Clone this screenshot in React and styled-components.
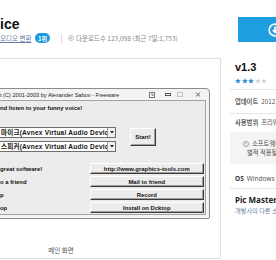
import React from 'react';
import styled, { createGlobalStyle } from 'styled-components';

const GlobalStyle = createGlobalStyle`
  html, body {
    margin: 0;
    padding: 0;
    background: #fff;
    overflow: hidden;
  }
  body {
    width: 276px;
    height: 260px;
    font-family: "Noto Sans", "Noto Sans CJK KR", sans-serif;
  }
`;

const Page = styled.div`
  width: 340px;
  display: flex;
  flex-direction: column;
`;

const Header = styled.header`
  display: flex;
  align-items: flex-start;
  height: 58px;
  padding-top: 16px;
  box-sizing: border-box;
`;

const TitleBlock = styled.div`
  flex: 1;
`;

const Title = styled.h1`
  margin: 0;
  font-family: "Liberation Sans", sans-serif;
  font-size: 14px;
  line-height: 16px;
  font-weight: bold;
  color: #111;
`;

const MetaRow = styled.div`
  display: flex;
  align-items: center;
  height: 10px;
  margin-top: 1px;
  font-size: 6.5px;
  color: #888;
`;

const CategoryLink = styled.a`
  color: #5f7ca6;
  text-decoration: underline;
  font-family: "Noto Sans CJK KR", sans-serif;
  width: 32px;
  white-space: nowrap;
`;

const Badge = styled.span`
  display: inline-flex;
  align-items: center;
  justify-content: center;
  width: 15px;
  height: 10px;
  margin-left: 3px;
  border-radius: 5px;
  background: #1e9be0;
  color: #fff;
  font-weight: bold;
  font-size: 6px;
  font-family: "Noto Sans CJK KR", sans-serif;
`;

const Separator = styled.span`
  width: 1px;
  height: 9px;
  margin-left: 11px;
  background: #dcdcdc;
`;

const Downloads = styled.span`
  display: flex;
  align-items: center;
  gap: 2px;
  margin-left: 6px;
  white-space: nowrap;
  font-family: "Noto Sans CJK KR", sans-serif;
`;

const DownloadButton = styled.button`
  width: 102px;
  height: 25px;
  margin-top: 1px;
  padding: 0 0 0 30px;
  border: none;
  background: #1f9fe2;
  display: flex;
  align-items: center;
`;

const Main = styled.main`
  display: flex;
  height: 201px;
`;

const ShotPanel = styled.section`
  width: 221px;
  height: 201px;
  box-sizing: border-box;
  border: 1px solid #e0e0e0;
  border-left: none;
  overflow: hidden;
  background: #fff;
`;

const Stage = styled.div`
  width: 320px;
  margin-left: -99px;
  padding-top: 29px;
  display: flex;
  flex-direction: column;
  align-items: center;
`;

const AppWindow = styled.div`
  width: 298px;
  height: 131px;
  box-sizing: border-box;
  border: 1px solid #8c8c8c;
  border-radius: 4px 4px 2px 2px;
  background: #f4f4f4;
  padding: 0 3px 3px 3px;
  display: flex;
  flex-direction: column;
  font-family: "Liberation Sans", "Noto Sans CJK KR", sans-serif;
  font-weight: bold;
  color: #111;
`;

const TitleBar = styled.div`
  height: 11px;
  display: flex;
  align-items: center;
  padding: 0 5px 0 84px;
  font-size: 5.6px;
  font-weight: normal;
  color: #222;
  white-space: nowrap;
`;

const CapButtons = styled.div`
  margin-left: auto;
  display: flex;
  align-items: center;
`;

const CapButton = styled.span`
  display: flex;
  margin-left: ${p => p.$gap || 0}px;
`;

const Client = styled.div`
  flex: 1;
  background: #ececec;
  border: 1px solid #a3a3a3;
  padding-left: 82px;
  padding-right: 1px;
  display: flex;
  flex-direction: column;
`;

const Heading = styled.div`
  margin-top: 3px;
  padding-left: 1px;
  font-size: 5.9px;
  line-height: 8px;
  white-space: nowrap;
`;

const ControlsRow = styled.div`
  display: flex;
  align-items: flex-start;
  margin-top: 15px;
`;

const ComboColumn = styled.div`
  display: flex;
  flex-direction: column;
  gap: 3px;
`;

const Combo = styled.div`
  width: 117px;
  height: 11px;
  box-sizing: border-box;
  display: flex;
  background: #fff;
  border: 1px solid #6e6e6e;
  font-size: 6.5px;
  letter-spacing: 0.25px;
  white-space: nowrap;
  overflow: hidden;
`;

const ComboText = styled.span`
  flex: 1;
  padding-left: 1px;
  line-height: 9px;
  overflow: hidden;
`;

const ComboArrow = styled.span`
  width: 7px;
  flex-shrink: 0;
  display: flex;
  align-items: center;
  justify-content: center;
  border-left: 1px solid #9a9a9a;
  background: #f0f0f0;
`;

const ClassicButton = styled.button`
  box-sizing: border-box;
  width: ${p => p.$w}px;
  height: ${p => p.$h}px;
  padding: 0;
  margin: 0;
  background: #ececec;
  border: 1px solid;
  border-color: #fff #3a3a3a #3a3a3a #fff;
  box-shadow: inset -1px -1px #a0a0a0;
  font-family: "Liberation Sans", sans-serif;
  font-weight: bold;
  font-size: 5.9px;
  color: #111;
  white-space: nowrap;
`;

const StartButton = styled(ClassicButton)`
  margin: 1px 0 0 14px;
`;

const ActionList = styled.div`
  display: flex;
  flex-direction: column;
  gap: 2px;
  margin-top: 11px;
`;

const ActionRow = styled.div`
  display: flex;
  align-items: center;
  height: 11px;
`;

const ActionLabel = styled.span`
  width: 90px;
  padding-left: 1px;
  font-size: 5.9px;
  white-space: nowrap;
`;

const Caption = styled.div`
  margin-top: 27px;
  font-size: 6.5px;
  line-height: 9px;
  color: #555;
  font-family: "Noto Sans CJK KR", sans-serif;
`;

const SideColumn = styled.aside`
  flex: 1;
  margin-left: 9px;
  display: flex;
  flex-direction: column;
  font-family: "Noto Sans", "Noto Sans CJK KR", sans-serif;
  color: #333;
`;

const Version = styled.div`
  margin-top: 2px;
  padding-left: 5px;
  font-family: "Liberation Sans", sans-serif;
  font-size: 11px;
  line-height: 14px;
  font-weight: bold;
  color: #111;
`;

const Stars = styled.div`
  display: flex;
  gap: 0.5px;
  margin-top: 4px;
  padding-left: 5px;
  height: 7px;
`;

const Divider = styled.div`
  height: 1px;
  background: #e6e6e6;
  margin-top: ${p => p.$top || 0}px;
`;

const InfoRow = styled.div`
  display: flex;
  align-items: center;
  gap: 3px;
  height: ${p => p.$h}px;
  padding-left: 5px;
  font-size: 6.3px;
  white-space: nowrap;
  font-family: "Noto Sans CJK KR", sans-serif;
`;

const RowLabel = styled.span`
  color: #333;
  font-weight: 500;
`;

const RowValue = styled.span`
  color: #555;
`;

const Notice = styled.div`
  margin-top: 2px;
  height: 32px;
  box-sizing: border-box;
  padding: 7px 0 0 13px;
  background: #f4f4f4;
  font-family: "Noto Sans CJK KR", sans-serif;
  font-size: 6.3px;
  line-height: 9px;
  color: #555;
  white-space: nowrap;
`;

const NoticeLine = styled.div`
  display: flex;
  align-items: center;
  gap: 3px;
  padding-left: ${p => p.$indent || 0}px;
`;

const OsRow = styled.div`
  margin-top: 10px;
  padding-left: 5px;
  font-size: 6.5px;
  line-height: 9px;
  color: #555;
  white-space: nowrap;
`;

const OsTag = styled.span`
  font-weight: bold;
  color: #333;
  margin-right: 3px;
`;

const Developer = styled.div`
  margin-top: 6px;
  padding-left: 5px;
  font-size: 8px;
  line-height: 10px;
  font-weight: bold;
  color: #222;
  white-space: nowrap;
`;

const DevLink = styled.div`
  margin-top: 2px;
  padding-left: 5px;
  font-family: "Noto Sans CJK KR", sans-serif;
  font-size: 6.2px;
  line-height: 8px;
  color: #6b82a6;
  white-space: nowrap;
`;

const Star = ({ on }) => (
  <svg width="6" height="6" viewBox="0 0 10 10">
    <path d="M5 0.4l1.4 3 3.3.3-2.5 2.2.8 3.3L5 7.5 2 9.2l.8-3.3L.3 3.7l3.3-.3z" fill={on ? '#2d8fd6' : '#cfd6de'} />
  </svg>
);

const DownloadIcon = ({ size, color, stroke }) => (
  <svg width={size} height={size} viewBox="0 0 12 12">
    <circle cx="6" cy="6" r="5" fill="none" stroke={color} strokeWidth={stroke} />
    <path d="M6 3v5M4 6l2 2 2-2" fill="none" stroke={color} strokeWidth={stroke} />
  </svg>
);

const ComboDrop = () => (
  <ComboArrow>
    <svg width="4" height="3" viewBox="0 0 4 3"><path d="M0 0h4L2 2.5z" fill="#222" /></svg>
  </ComboArrow>
);

const actions = [
  { label: 'great software!', text: 'http://www.graphics-tools.com' },
  { label: 'o a friend', text: 'Mail to friend' },
  { label: 'p', text: 'Record' },
  { label: 'op', text: 'Install on Dcktop' },
];

export default function App() {
  return (
    <>
      <GlobalStyle />
      <Page>
        <Header>
          <TitleBlock>
            <Title>ice</Title>
            <MetaRow>
              <CategoryLink>오디오 변환</CategoryLink>
              <Badge>1위</Badge>
              <Separator />
              <Downloads>
                <DownloadIcon size={6} color="#999" stroke={1.2} />
                다운로드수 123,098 (최근 7일:1,753)
              </Downloads>
            </MetaRow>
          </TitleBlock>
          <DownloadButton>
            <DownloadIcon size={14} color="#fff" stroke={1.4} />
          </DownloadButton>
        </Header>

        <Main>
          <ShotPanel>
            <Stage>
              <AppWindow>
                <TitleBar>
                  t (C) 2001-2003 by Alexander Sabov - Freeware
                  <CapButtons>
                    <CapButton>
                      <svg width="6" height="6" viewBox="0 0 6 6">
                        <rect x="0.5" y="0.5" width="5" height="5" fill="#fff" stroke="#777" />
                        <path d="M2 2.2h2v1.4H3v.6" fill="none" stroke="#555" strokeWidth="0.7" />
                      </svg>
                    </CapButton>
                    <CapButton $gap={10}>
                      <svg width="6" height="3" viewBox="0 0 6 3">
                        <rect x="0.5" y="0.5" width="5" height="2" fill="#fff" stroke="#555" />
                      </svg>
                    </CapButton>
                    <CapButton $gap={6}>
                      <svg width="6" height="5" viewBox="0 0 6 5">
                        <rect x="0.5" y="0.5" width="5" height="4" fill="none" stroke="#c4c4c4" />
                      </svg>
                    </CapButton>
                    <CapButton $gap={12}>
                      <svg width="6" height="5" viewBox="0 0 6 5">
                        <path d="M0.8 0.5l4.4 4M5.2 0.5l-4.4 4" stroke="#555" strokeWidth="0.9" />
                      </svg>
                    </CapButton>
                  </CapButtons>
                </TitleBar>
                <Client>
                  <Heading>nd listen to your funny voice!</Heading>
                  <ControlsRow>
                    <ComboColumn>
                      <Combo>
                        <ComboText>마이크(Avnex Virtual Audio Device)</ComboText>
                        <ComboDrop />
                      </Combo>
                      <Combo>
                        <ComboText>스피커(Avnex Virtual Audio Device)</ComboText>
                        <ComboDrop />
                      </Combo>
                    </ComboColumn>
                    <StartButton $w={26} $h={18}>Start!</StartButton>
                  </ControlsRow>
                  <ActionList>
                    {actions.map(a => (
                      <ActionRow key={a.text}>
                        <ActionLabel>{a.label}</ActionLabel>
                        <ClassicButton $w={115} $h={11}>{a.text}</ClassicButton>
                      </ActionRow>
                    ))}
                  </ActionList>
                </Client>
              </AppWindow>
              <Caption>메인 화면</Caption>
            </Stage>
          </ShotPanel>

          <SideColumn>
            <Version>v1.3</Version>
            <Stars>
              {[1, 2, 3, 4, 5].map(n => <Star key={n} on={n <= 3} />)}
            </Stars>
            <Divider $top={4} />
            <InfoRow $h={23}>
              <RowLabel>업데이트</RowLabel>
              <RowValue>2012.07.19</RowValue>
            </InfoRow>
            <Divider />
            <InfoRow $h={16}>
              <RowLabel>사용범위</RowLabel>
              <RowValue>프리웨어</RowValue>
            </InfoRow>
            <Notice>
              <NoticeLine>
                <svg width="6" height="6" viewBox="0 0 12 12">
                  <circle cx="6" cy="6" r="5.2" fill="none" stroke="#777" strokeWidth="1.2" />
                  <path d="M6 3v4M6 8.3v1" stroke="#777" strokeWidth="1.4" />
                </svg>
                소프트웨어 사용범위는 개
              </NoticeLine>
              <NoticeLine $indent={4}>별적 적용될 수 있습니다</NoticeLine>
            </Notice>
            <OsRow>
              <OsTag>OS</OsTag>Windows XP/Vista/7
            </OsRow>
            <Divider $top={5} />
            <Developer>Pic Master</Developer>
            <DevLink>개발사의 다른 소프트웨어</DevLink>
          </SideColumn>
        </Main>
      </Page>
    </>
  );
}
